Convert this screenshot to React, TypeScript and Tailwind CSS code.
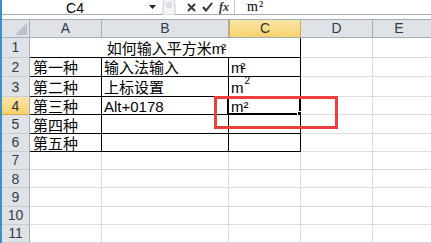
import React from 'react';

const font = "font-['Liberation_Sans','Noto_Sans_CJK_SC',sans-serif]";

type Row = {
  n: number;
  h: string;
  a?: string;
  b?: React.ReactNode;
  c?: React.ReactNode;
  table: boolean;
};

// ㎡-like glyph: the small 2 tucked into the m
const M2Tight = () => <span className="tracking-[-3px]">m²</span>;

const rows: Row[] = [
  { n: 2, h: 'h-[20px]', a: '第一种', b: '输入法输入', c: <M2Tight />, table: true },
  {
    n: 3,
    h: 'h-[21px]',
    a: '第二种',
    b: '上标设置',
    c: (
      <span className="inline-flex items-start">
        m<span className="text-[10px] leading-none -mt-[4px] ml-[1px]">2</span>
      </span>
    ),
    table: true,
  },
  { n: 4, h: 'h-[19px]', a: '第三种', b: 'Alt+0178', c: 'm²', table: true },
  { n: 5, h: 'h-[19px]', a: '第四种', table: true },
  { n: 6, h: 'h-[19px]', a: '第五种', table: true },
  { n: 7, h: 'h-[19px]', table: false },
  { n: 8, h: 'h-[19px]', table: false },
  { n: 9, h: 'h-[19px]', table: false },
  { n: 10, h: 'h-[19px]', table: false },
  { n: 11, h: 'h-[19px]', table: false },
];

const FormulaBar = () => (
  <div className="h-[15px] flex items-center border-b border-[#a9adb2] bg-white">
    <div className="w-[146px] text-center text-[14px] leading-none text-black pt-[1px]">C4</div>
    <svg width="8" height="5" viewBox="0 0 8 5" className="ml-[1px] mt-[1px]">
      <path d="M0 0 H7 L3.5 4 Z" fill="#222" />
    </svg>
    <svg width="14" height="15" viewBox="0 0 14 15" className="ml-[5px]">
      <path d="M1 4 A6 6 0 0 1 13 4 V15 H1 Z" fill="#f4f5f6" stroke="#c6cacf" />
      <circle cx="7" cy="5" r="3.5" fill="#dcdfe2" />
    </svg>
    <svg width="9" height="9" viewBox="0 0 9 9" className="ml-[11px]">
      <path d="M1 1 L8 8 M8 1 L1 8" stroke="#333" strokeWidth="1.8" />
    </svg>
    <svg width="11" height="10" viewBox="0 0 11 10" className="ml-[6px]">
      <path d="M1 5 L4 8.5 L10 1" stroke="#333" strokeWidth="2" fill="none" />
    </svg>
    <span className="ml-[6px] text-[12px] italic font-bold font-['Liberation_Serif',serif] text-[#333] leading-none">
      fx
    </span>
    <div className="ml-[5px] w-px h-full bg-[#c5c9ce]" />
    <span className="ml-[12px] text-[14px] leading-none font-['Liberation_Serif',serif] tracking-[1px]">m²</span>
  </div>
);

const ColHeader = ({ w, label, sel }: { w: string; label: string; sel?: boolean }) => (
  <div
    className={`${w} h-full flex items-center justify-center text-[14px] leading-none border-r ${
      sel
        ? 'bg-gradient-to-b from-[#fbe5a8] to-[#f7d16c] border-[#d9a545] border-l text-[#333]'
        : 'bg-[#dfe3e8] border-[#a7adb4] text-[#333b45]'
    }`}
  >
    {label}
  </div>
);

export default function App() {
  return (
    <div className={`relative w-[431px] h-[243px] overflow-hidden bg-white flex ${font}`}>
      <div className="w-[2px] h-full bg-[#3b90c5]" />
      <div className="flex-1 flex flex-col">
        <FormulaBar />
        <div className="h-[4px] bg-white" />
        <div className="h-[19px] flex border-t border-b border-[#a7adb4]">
          <div className="w-[28px] h-full bg-[#dfe3e8] border-r border-[#a7adb4] relative">
            <svg width="12" height="12" viewBox="0 0 12 12" className="absolute right-[2px] bottom-[2px]">
              <path d="M12 0 V12 H0 Z" fill="#bcc2c8" />
            </svg>
          </div>
          <ColHeader w="w-[72px]" label="A" />
          <ColHeader w="w-[127px]" label="B" />
          <ColHeader w="w-[72px]" label="C" sel />
          <ColHeader w="w-[72px]" label="D" />
          <div className="flex-1 h-full flex items-center justify-center text-[14px] bg-[#dfe3e8] text-[#333b45] pr-[6px]">
            E
          </div>
        </div>

        {/* row 1, merged A1:C1 */}
        <div className="h-[20px] flex">
          <div className="w-[28px] h-full bg-[#dfe3e8] border-r border-b border-r-[#a7adb4] border-b-[#c9cdd2] flex items-center justify-center text-[14px] text-[#333b45]">
            1
          </div>
          <div className="w-[271px] h-full border-r border-b border-black flex items-center justify-center text-[15px] leading-none text-black pt-[2px]">
            <span>如何输入平方米</span>
            <M2Tight />
          </div>
          <div className="w-[72px] h-full border-r border-b border-[#dadcdd]" />
          <div className="flex-1 h-full border-b border-[#dadcdd]" />
        </div>

        {rows.map((r) => (
          <div key={r.n} className={`${r.h} flex`}>
            <div
              className={`w-[28px] h-full border-r border-b border-r-[#a7adb4] flex items-center justify-center text-[14px] leading-none ${
                r.n === 4
                  ? 'bg-gradient-to-b from-[#fbe5a8] to-[#f7d16c] border-b-[#d9a545] text-[#333]'
                  : 'bg-[#dfe3e8] border-b-[#c9cdd2] text-[#333b45]'
              }`}
            >
              {r.n}
            </div>
            <div
              className={`w-[72px] h-full border-r border-b flex items-center pl-[3px] text-[15px] leading-none text-black pt-[2px] ${
                r.table ? 'border-black' : 'border-[#dadcdd]'
              }`}
            >
              {r.a}
            </div>
            <div
              className={`w-[127px] h-full border-r border-b flex items-center pl-[2px] text-[15px] leading-none text-black pt-[2px] ${
                r.table ? 'border-black' : 'border-[#dadcdd]'
              }`}
            >
              {r.b}
            </div>
            <div
              className={`relative w-[72px] h-full border-r border-b flex items-center pl-[2px] text-[15px] leading-none text-black pt-[2px] ${
                r.table ? 'border-black' : 'border-[#dadcdd]'
              }`}
            >
              {r.c}
              {r.n === 4 && (
                <div className="absolute -left-[2px] -top-[1px] -right-[1px] -bottom-[1px] border-2 border-black">
                  <div className="absolute -right-[3px] -bottom-[3px] w-[5px] h-[5px] bg-black border border-white" />
                </div>
              )}
            </div>
            <div className="w-[72px] h-full border-r border-b border-[#dadcdd]" />
            <div className="flex-1 h-full border-b border-[#dadcdd]" />
          </div>
        ))}
      </div>

      {/* annotation box */}
      <div className="absolute left-[214px] top-[96px] w-[124px] h-[33px] border-[3px] border-[#ee3f3f]" />
    </div>
  );
}
